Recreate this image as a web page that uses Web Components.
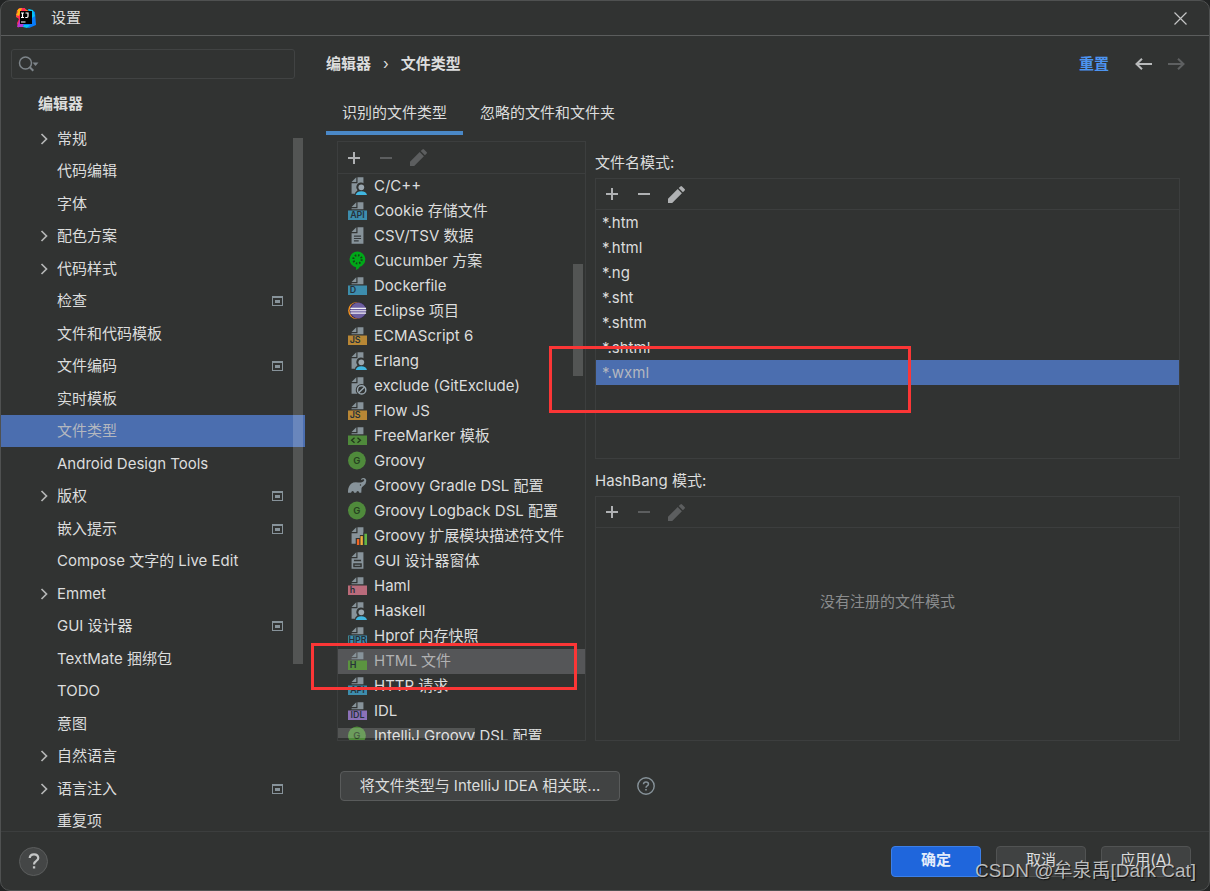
<!DOCTYPE html>
<html lang="zh-CN">
<head>
<meta charset="utf-8">
<title>设置</title>
<style>
  html, body { margin: 0; height: 100%; }
  body {
    --bg: #313332;
    --line: #3c3e3e;
    --edge: #4f5151;
    --text: #dcdddd;
    --muted: #8b8d8e;
    --icon: #afb1b3;
    --icon-off: #5c5e5f;
    --select: #4b6eaf;
    --accent: #4a88c7;
    background: #222424;
    color: var(--text);
    font: 15px/20px Inter, "Noto Sans CJK SC", sans-serif;
  }
</style>
</head>
<body>
<settings-window>
  <title-bar slot="title">设置</title-bar>
  <settings-tree slot="side" heading="编辑器">
    <tree-item expandable>常规</tree-item>
    <tree-item>代码编辑</tree-item>
    <tree-item>字体</tree-item>
    <tree-item expandable>配色方案</tree-item>
    <tree-item expandable>代码样式</tree-item>
    <tree-item project>检查</tree-item>
    <tree-item>文件和代码模板</tree-item>
    <tree-item project>文件编码</tree-item>
    <tree-item>实时模板</tree-item>
    <tree-item selected>文件类型</tree-item>
    <tree-item>Android Design Tools</tree-item>
    <tree-item expandable project>版权</tree-item>
    <tree-item project>嵌入提示</tree-item>
    <tree-item>Compose 文字的 Live Edit</tree-item>
    <tree-item expandable>Emmet</tree-item>
    <tree-item project>GUI 设计器</tree-item>
    <tree-item>TextMate 捆绑包</tree-item>
    <tree-item>TODO</tree-item>
    <tree-item>意图</tree-item>
    <tree-item expandable>自然语言</tree-item>
    <tree-item expandable project>语言注入</tree-item>
    <tree-item>重复项</tree-item>
  </settings-tree>
  <page-header slot="main"></page-header>
  <tab-strip slot="main"></tab-strip>
  <file-types-page slot="main">
    <type-list slot="types">
      <type-item icon="user">C/C++</type-item>
      <type-item icon="band" tag="API" tint="#3d8dad">Cookie 存储文件</type-item>
      <type-item icon="text">CSV/TSV 数据</type-item>
      <type-item icon="cucumber">Cucumber 方案</type-item>
      <type-item icon="band" tag="D" tint="#3d8dad">Dockerfile</type-item>
      <type-item icon="eclipse">Eclipse 项目</type-item>
      <type-item icon="band" tag="JS" tint="#b88735">ECMAScript 6</type-item>
      <type-item icon="user">Erlang</type-item>
      <type-item icon="ignored">exclude (GitExclude)</type-item>
      <type-item icon="band" tag="JS" tint="#b88735">Flow JS</type-item>
      <type-item icon="markup">FreeMarker 模板</type-item>
      <type-item icon="groovy">Groovy</type-item>
      <type-item icon="gradle">Groovy Gradle DSL 配置</type-item>
      <type-item icon="groovy">Groovy Logback DSL 配置</type-item>
      <type-item icon="bars">Groovy 扩展模块描述符文件</type-item>
      <type-item icon="form">GUI 设计器窗体</type-item>
      <type-item icon="band" tag="h" tint="#ba6b7b">Haml</type-item>
      <type-item icon="user">Haskell</type-item>
      <type-item icon="band" tag="HPR" tint="#3d8dad">Hprof 内存快照</type-item>
      <type-item icon="band" tag="H" tint="#5b9440" selected>HTML 文件</type-item>
      <type-item icon="band" tag="API" tint="#3d8dad">HTTP 请求</type-item>
      <type-item icon="band" tag="IDL" tint="#8b71b8">IDL</type-item>
      <type-item icon="groovy">IntelliJ Groovy DSL 配置</type-item>
    </type-list>
    <pattern-panel slot="names" label="文件名模式:" can-edit>
      <pattern-item>*.htm</pattern-item>
      <pattern-item>*.html</pattern-item>
      <pattern-item>*.ng</pattern-item>
      <pattern-item>*.sht</pattern-item>
      <pattern-item>*.shtm</pattern-item>
      <pattern-item>*.shtml</pattern-item>
      <pattern-item selected>*.wxml</pattern-item>
    </pattern-panel>
    <pattern-panel slot="hashbang" label="HashBang 模式:" empty="没有注册的文件模式"></pattern-panel>
  </file-types-page>
  <associate-row slot="main"></associate-row>
  <dialog-footer slot="footer"></dialog-footer>
  <mark-box slot="over" style="--x:549px;--y:346px;--w:362px;--h:67px"></mark-box>
  <mark-box slot="over" style="--x:311px;--y:643px;--w:266px;--h:47px"></mark-box>
  <water-mark slot="over">CSDN @牟泉禹[Dark Cat]</water-mark>
</settings-window>

<script>
const RESET = `
  *, *::before { box-sizing: border-box; }
  button { font: inherit; color: inherit; background: none; border: 0; padding: 0; margin: 0; }
  svg { display: block; }
`;

function define(name, render) {
  customElements.define(name, class extends HTMLElement {
    constructor() {
      super();
      this.attachShadow({ mode: 'open' });
    }
    connectedCallback() {
      const t = document.createElement('template');
      t.innerHTML = `<style>${RESET}</style>` + render(this);
      this.shadowRoot.replaceChildren(t.content.cloneNode(true));
    }
  });
}

define('settings-window', () => `
  <style>
    :host { display: flex; flex-direction: column; position: relative; box-sizing: border-box;
      height: 100vh; background: var(--bg); border: 1px solid var(--edge); border-radius: 10px; overflow: hidden; }
    .body { flex: 1; min-height: 0; display: flex; }
    main { flex: 1; min-width: 0; display: flex; flex-direction: column; padding-left: 21px; }
  </style>
  <slot name="title"></slot>
  <div class="body"><slot name="side"></slot><main><slot name="main"></slot></main></div>
  <slot name="footer"></slot>
  <slot name="over"></slot>`);

define('title-bar', () => `
  <style>
    :host { display: flex; align-items: center; box-sizing: border-box; height: 35px; padding: 0 22px 0 15px;
      border-bottom: 1px solid #5b5d5d; }
    span { flex: 1; margin-left: 15px; }
  </style>
  <svg width="20" height="20" viewBox="0 0 20 20" aria-hidden="true">
    <path fill="#fc801d" d="M1 2 7 0l6 3-7 9-6-3z"/>
    <path fill="#fe2857" d="M3 0h6l2 8-9 12-1-5 2-4-3-3z"/>
    <path fill="#fdb60d" d="M2 1 6 0 3 8 0 7l2-3z"/>
    <path fill="#b33ad6" d="M1 19 4 11l7 8z"/>
    <path fill="#087cfa" d="m13 1 6 3 1 13-7 3-6-2z"/>
    <path fill="#07c3f2" d="m12 1 5 1 2 6-3 2zM8 17l6 0-3 3-4-1z"/>
    <path fill="#000" d="M4 3h12v13H4z"/>
    <path stroke="#fff" stroke-width="1.200" fill="none" d="M5 5h3M6.500 5v4.500M5 9.500h3M9.500 5h2.500v3.300q0 1.200-1.200 1.200H9.300M5 14h4.500"/>
  </svg>
  <span><slot></slot></span>
  <button aria-label="关闭"><svg width="13" height="13" viewBox="0 0 13 13"><path d="M.5.5l12 12M12.500.5l-12 12" stroke="#c4c5c5" stroke-width="1.200"/></svg></button>`);

define('search-box', () => `
  <style>
    :host { display: flex; align-items: center; box-sizing: border-box; height: 30px; padding-left: 6px;
      border: 1px solid #414343; border-radius: 3px; }
    input { flex: 1; min-width: 0; border: 0; background: none; outline: 0; color: inherit; font: inherit; }
    label { flex: none; }
  </style>
  <label for="q"><svg width="22" height="18" viewBox="0 0 22 18" role="img" aria-label="搜索">
    <g fill="none" stroke="#7d8489" stroke-width="1.500"><circle cx="7.500" cy="8" r="6"/><path stroke-width="2" d="m11.800 12.300 3.500 3.500"/></g>
    <path fill="#7d8489" d="M14.500 7.500h6l-3 3.500z"/></svg></label>
  <input id="q" type="text">`);

define('settings-tree', el => `
  <style>
    :host { display: flex; flex-direction: column; flex: none; position: relative; width: 304px; overflow: hidden; }
    search-box { margin: 13px 10px 0; flex: none; }
    h2 { flex: none; margin: 0; padding: 10px 0 0 37px; height: 43px; font-size: 15px; line-height: 30px; font-weight: 700; }
    .tree { flex: 1; min-height: 0; overflow: hidden; }
    ::slotted(:nth-child(odd)) { height: 33px; }
    i { position: absolute; right: 2px; top: 102px; width: 10px; height: 526px; background: rgba(255,255,255,.17); }
  </style>
  <search-box></search-box>
  <h2>${el.getAttribute('heading')}</h2>
  <div class="tree" role="tree"><slot></slot></div>
  <i></i>`);

define('tree-item', el => `
  <style>
    :host { display: flex; align-items: center; box-sizing: border-box; height: 32px; padding: 0 22px 0 39px; }
    :host([selected]) { background: var(--select); color: #b3b7bf; }
    .twist { width: 17px; flex: none; }
    .name { flex: 1; white-space: nowrap; }
  </style>
  <span class="twist">${el.hasAttribute('expandable') ? `<svg width="8" height="12" viewBox="0 0 8 12"><path d="m1.500 1 5 5-5 5" fill="none" stroke="#b4b6b6" stroke-width="1.700"/></svg>` : ''}</span>
  <span class="name" role="treeitem"><slot></slot></span>
  ${el.hasAttribute('project') ? `<svg width="11" height="10" viewBox="0 0 11 10"><path fill="#87939a" fill-rule="evenodd" d="M0 0h11v10H0zM1 2v7h9V2z"/><path fill="#87939a" d="M3 4h5v3H3z"/></svg>` : ''}`);

define('page-header', () => `
  <style>
    :host { display: flex; align-items: center; flex: none; height: 56px; padding-right: 24px; font-weight: 700; }
    nav { flex: 1; display: flex; gap: 12px; }
    nav b { font-weight: 400; }
    a { color: #4d94f0; text-decoration: none; margin-right: 26px; }
    button + button { margin-left: 16px; }
  </style>
  <nav><span>编辑器</span><b>›</b><span>文件类型</span></nav>
  <a href="#reset">重置</a>
  <button aria-label="后退"><svg width="17" height="12" viewBox="0 0 17 12"><path d="M17 6H1.500M7 .8 1.500 6 7 11.200" fill="none" stroke="#b8babb" stroke-width="2"/></svg></button>
  <button aria-label="前进" disabled><svg width="17" height="12" viewBox="0 0 17 12"><path d="M0 6h15.500M10 .8 15.500 6 10 11.200" fill="none" stroke="#5e6061" stroke-width="2"/></svg></button>`);

define('tab-strip', () => `
  <style>
    :host { display: flex; flex: none; height: 43px; gap: 1px; }
    button { padding: 3px 16px 0; border-bottom: 4px solid transparent; }
    button[aria-selected=true] { border-color: var(--accent); }
  </style>
  <button role="tab" aria-selected="true">识别的文件类型</button>
  <button role="tab" aria-selected="false">忽略的文件和文件夹</button>`);

define('tool-bar', el => {
  const off = k => (el.getAttribute('off') || '').includes(k) ? 'disabled' : '';
  return `
  <style>
    :host { display: flex; flex: none; box-sizing: border-box; height: 31px; border-bottom: 1px solid var(--line); }
    button { width: 32px; display: grid; place-items: center; color: var(--icon); }
    button:disabled { color: var(--icon-off); }
  </style>
  <button aria-label="添加"><svg width="14" height="14" viewBox="0 0 14 14"><path d="M1 7h12M7 1v12" stroke="currentColor" stroke-width="2"/></svg></button>
  <button aria-label="移除" ${off('remove')}><svg width="14" height="14" viewBox="0 0 14 14"><path d="M1 7h12" stroke="currentColor" stroke-width="2"/></svg></button>
  <button aria-label="编辑" ${off('edit')}><svg width="17" height="17" viewBox="0 0 17 17"><path fill="currentColor" d="M0 17v-4.200L9.700 3.100l4.200 4.200L4.200 17zM10.700 2.100l1.700-1.700q.8-.8 1.600 0L16.600 3q.8.8 0 1.600l-1.700 1.700z"/></svg></button>`;
});

define('file-types-page', () => `
  <style>
    :host { flex: 1; min-height: 0; display: grid; grid-template-columns: 249px 1fr; gap: 9px; padding: 6px 29px 0 11px; }
    .right { display: flex; flex-direction: column; min-height: 0; min-width: 0; }
    slot[name=types]::slotted(*) { min-height: 0; }
    slot[name=names]::slotted(*) { flex: 53 1 0; }
    slot[name=hashbang]::slotted(*) { flex: 47 1 0; }
  </style>
  <slot name="types"></slot>
  <div class="right"><slot name="names"></slot><slot name="hashbang"></slot></div>`);

define('type-list', () => `
  <style>
    :host { display: flex; flex-direction: column; position: relative; border: 1px solid var(--line); overflow: hidden; }
    tool-bar { height: 32px; }
    .rows { flex: 1; min-height: 0; overflow: hidden; }
    i { position: absolute; background: rgba(255,255,255,.17); }
    .v { right: 2px; top: 122px; width: 10px; height: 112px; }
    .h { left: 0; bottom: 2px; width: 137px; height: 10px; }
  </style>
  <tool-bar off="remove edit"></tool-bar>
  <div class="rows" role="listbox" aria-label="文件类型"><slot></slot></div>
  <i class="v"></i><i class="h"></i>`);

define('type-item', el => `
  <style>
    :host { display: flex; align-items: center; gap: 7px; box-sizing: border-box; height: 25px; padding: 0 0 2px 10px; white-space: nowrap; }
    :host([selected]) { background: #555658; color: #b0b1b2; }
  </style>
  <type-icon kind="${el.getAttribute('icon')}" tag="${el.getAttribute('tag') || ''}" tint="${el.getAttribute('tint') || ''}"></type-icon>
  <span role="option"><slot></slot></span>`);

const SHEET = '<path fill="#87939a" d="M7 1 3 5h4zM8 1v5H3v9h10V1z"/>';
const HALF = '<path fill="#87939a" d="M7 1 3 5h4zM8 1v5H3v1h10V1z"/>';
const band = tint => `<path fill="${tint}" d="M0 8h16v8H0z"/>`;
const ICONS = {
  band: (tag, tint) => HALF + band(tint) + `<text x="${tag.length > 2 ? 8 : 1.4}" y="14.700" text-anchor="${tag.length > 2 ? 'middle' : 'start'}" font-size="7.500" font-weight="600" fill="#26313a">${tag}</text>`,
  markup: () => HALF + band('#4f8a3b') + '<path d="M5.500 9.800 3 12l2.500 2.200M8 9.800l2.500 2.200L8 14.200" fill="none" stroke="#23361c" stroke-width="1.100"/>',
  text: () => SHEET + '<path stroke="#35393b" d="M5 8.500h6M5 10.500h6M5 12.500h4"/>',
  form: () => SHEET + '<path fill="none" stroke="#313332" stroke-width="1.200" d="M5 8h6M5 11h6v2H5z"/>',
  user: () => SHEET + '<path fill="#313332" d="M7 10a4 4 0 0 1 8-1l1 1v6H6v-2l2-2z"/><circle cx="11.200" cy="9.500" r="2.400" fill="#9aa7b0"/><path fill="#40b6e0" d="M6.500 16q.5-3.200 4.700-3.200T16 16z"/>',
  ignored: () => SHEET + '<circle cx="11.500" cy="11.700" r="5" fill="#313332"/><g fill="none" stroke="#9aa7b0" stroke-width="1.200"><circle cx="11.500" cy="11.700" r="3.500"/><path d="m9 14.200 5-5"/></g>',
  bars: () => SHEET + '<path fill="#313332" d="M6.500 10H10V7.500h3V5.500h3V16H6.500z"/><path fill="#f26522" d="M7.500 11h2v5h-2z"/><path fill="#f4af3d" d="M10.500 8.500h2V16h-2z"/><path fill="#62b543" d="M13.800 6.500H16V16h-2.200z"/>',
  cucumber: () => '<path fill="#00a818" d="M8 .5a6.500 6.500 0 0 1 2 12.700q-1 1.800-3.200 2.800v-2.400A6.600 6.600 0 0 1 8 .5z"/><g fill="none" stroke="#14421a" stroke-width="1.700" stroke-dasharray="1.300 1.450"><circle cx="8" cy="7" r="3.500"/></g>',
  eclipse: () => '<circle cx="7.300" cy="8" r="7.200" fill="#f7941e"/><circle cx="8.300" cy="8" r="7" fill="#2c2255"/><circle cx="8.600" cy="8" r="6.600" fill="#6d5fa0"/><path stroke="#f0eef5" stroke-width="1" d="M2 6.200h13.200M1.800 8.200h13.600M2 10.200h13.200"/>',
  groovy: () => '<circle cx="7.500" cy="8" r="7.500" fill="#4f8a3b"/><text x="7.500" y="10.900" text-anchor="middle" font-size="8" font-weight="600" fill="#263f20">G</text>',
  gradle: () => '<path fill="#87939a" d="M0 14q-.2-5 2.600-7.500 2.600-1.800 6-1 2 .2 3-.2 1.600-.6 2-1.600.2-1-.9-.9-.7.100-1.200.6l-.6-.7q1-1.100 2.200-1 2.300.3 2.300 2.500-.2 3-2.500 4.200-1.300.6-1.500 1.800L11.200 14H9.500q-.3-1.400-1.300-1.400T6.900 14H5.200q-.3-1.400-1.300-1.400T2.600 14z"/><circle cx="10.500" cy="7.600" r=".6" fill="#313332"/>'
};

define('type-icon', el => `
  <style>:host { display: block; flex: none; width: 19px; height: 19px; }</style>
  <svg width="19" height="19" viewBox="0 0 16 16" aria-hidden="true">${ICONS[el.getAttribute('kind')](el.getAttribute('tag'), el.getAttribute('tint'))}</svg>`);

define('pattern-panel', el => `
  <style>
    :host { display: flex; flex-direction: column; min-height: 0; }
    .label { flex: none; height: 37px; padding-top: 6px; display: flex; align-items: center; }
    .box { flex: 1; min-height: 0; display: flex; flex-direction: column; border: 1px solid var(--line); overflow: hidden; }
    .empty { flex: 1; display: grid; place-items: center; margin: 0; padding-bottom: 64px; color: var(--muted); }
  </style>
  <div class="label" id="l">${el.getAttribute('label')}</div>
  <div class="box" role="group" aria-labelledby="l">
    <tool-bar off="${el.hasAttribute('can-edit') ? '' : 'remove edit'}"></tool-bar>
    ${el.hasAttribute('empty') ? `<p class="empty">${el.getAttribute('empty')}</p>` : '<div role="listbox" aria-labelledby="l"><slot></slot></div>'}
  </div>`);

define('pattern-item', () => `
  <style>
    :host { display: flex; align-items: center; height: 25px; padding-left: 6px; }
    :host([selected]) { background: var(--select); color: #b3b7bf; }
  </style>
  <span role="option"><slot></slot></span>`);

define('associate-row', () => `
  <style>
    :host { display: flex; align-items: center; flex: none; height: 90px; padding-left: 14px; gap: 17px; }
    .main { width: 280px; height: 30px; border: 1px solid #595b5b; border-radius: 4px; background: #414343; white-space: nowrap; }
  </style>
  <button class="main">将文件类型与 IntelliJ IDEA 相关联...</button>
  <button aria-label="帮助"><svg width="18" height="18" viewBox="0 0 18 18"><g fill="none" stroke="#87939a"><circle cx="9" cy="9" r="8.200" stroke-width="1.400"/><path stroke-width="1.500" d="M6.500 7.200Q6.600 5 9 5t2.500 2.100Q11.500 8.300 9.900 9.200 9 9.700 9 10.800"/></g><path fill="#87939a" d="M8.200 12h1.600v1.600H8.200z"/></svg></button>`);

define('dialog-footer', () => `
  <style>
    :host { display: flex; align-items: center; flex: none; box-sizing: border-box; height: 59px; padding: 0 18px;
      gap: 15px; border-top: 1px solid var(--line); }
    .help { width: 29px; height: 29px; border: 1px solid #5b5d5d; border-radius: 50%; background: #444646; margin-right: auto; display: grid; place-items: center; }
    .b { width: 90px; height: 31px; border: 1px solid #515353; border-radius: 4px; background: #404242; padding-bottom: 2px; }
    .ok { background: #1f66dc; border-color: #3c7fe8; font-weight: 700; color: #e3ecfb; }
  </style>
  <button class="help" aria-label="帮助"><svg width="12" height="16" viewBox="0 0 12 16"><path fill="none" stroke="#c4c6c6" stroke-width="2.200" d="M1.700 5Q1.900 1.300 6 1.300T10.300 5Q10.300 6.700 8 8.200 6 9.300 6 11.500"/><path fill="#c4c6c6" d="M4.900 13.300h2.300v2.300H4.900z"/></svg></button>
  <button class="b ok">确定</button>
  <button class="b">取消</button>
  <button class="b">应用(<u>A</u>)</button>`);

define('mark-box', () => `
  <style>:host { position: absolute; box-sizing: border-box; left: calc(var(--x) - 1px); top: calc(var(--y) - 1px);
    width: var(--w); height: var(--h); border: 3px solid #fb3636; pointer-events: none; }</style>`);

define('water-mark', () => `
  <style>:host { position: absolute; right: 13px; bottom: 5px; font-family: "Liberation Sans", "Noto Sans CJK SC", sans-serif; font-size: 19px; line-height: 28px;
    color: rgba(215,216,216,.85); text-shadow: 1px 1px 1px #111; white-space: nowrap; pointer-events: none; }</style>
  <slot></slot>`);
</script>
</body>
</html>
